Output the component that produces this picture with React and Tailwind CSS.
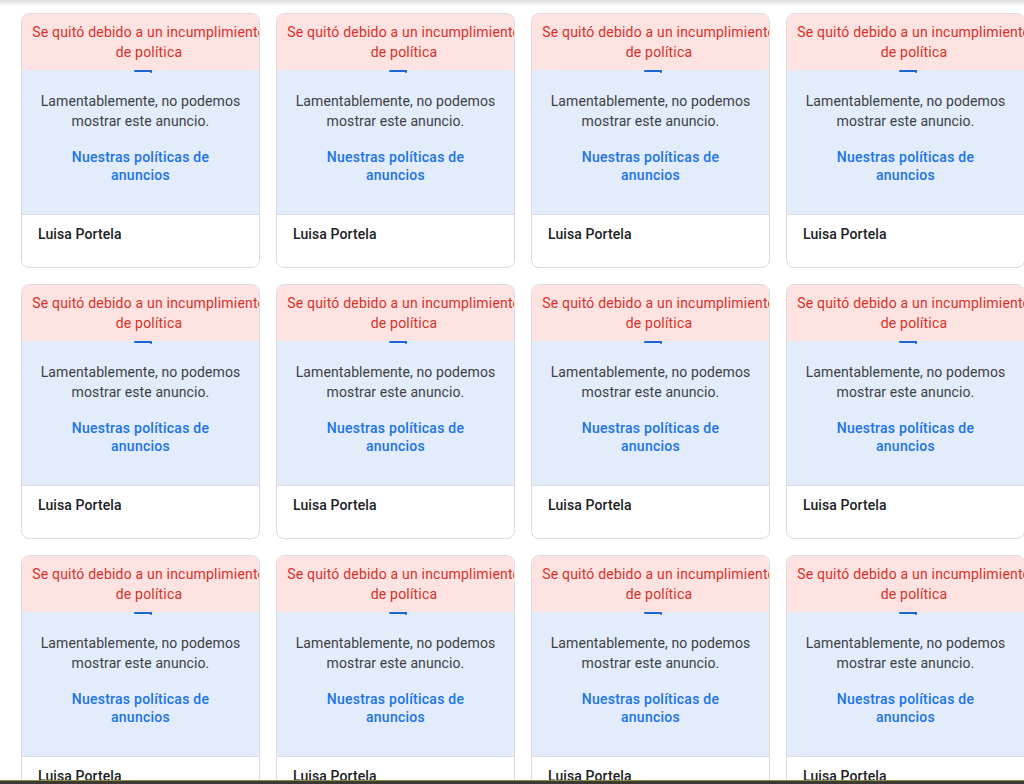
import React from 'react';

const cards = Array.from({ length: 12 }, (_, i) => ({ id: i, author: 'Luisa Portela' }));

function RemovedAdCard({ author }) {
  return (
    <div className="w-[239px] h-[255px] flex flex-col overflow-hidden rounded-lg border border-[#dadce0] bg-white">
      {/* policy violation banner */}
      <div className="h-[56px] shrink-0 bg-[#fde2e2] pl-[10px] py-2">
        <p className="w-[234px] text-center text-[14px] leading-5 tracking-[0.2px] text-[#d93025]">
          Se quitó debido a un incumplimiento de política
        </p>
      </div>

      {/* preview area */}
      <div className="relative h-[144px] shrink-0 bg-[#e3ecfb] flex flex-col items-center">
        <div className="absolute left-[112px] top-0 w-[18px] h-[2px] rounded-full bg-[#1967d2]" />
        <div className="absolute left-[128px] top-0 w-[2px] h-[3px] rounded-b-full bg-[#1967d2]" />
        <p className="mt-[21px] text-center text-[14px] leading-5 tracking-[0.1px] text-[#3c4043]">
          Lamentablemente, no podemos
          <br />
          mostrar este anuncio.
        </p>
        <a className="mt-[17px] text-center text-[14px] leading-[18px] tracking-[0.25px] font-medium text-[#1a73e8]">
          Nuestras políticas de
          <br />
          anuncios
        </a>
      </div>

      <div className="flex-1 border-t border-[#dadce0] px-4 pt-[7px]">
        <span className="text-[14px] leading-5 font-medium tracking-[0.1px] text-[#202124]">{author}</span>
      </div>
    </div>
  );
}

export default function App() {
  return (
    <div
      className="relative h-[784px] w-[1024px] overflow-hidden bg-white"
      style={{ fontFamily: 'Roboto, "Noto Sans", Arial, sans-serif' }}
    >
      <div className="h-[6px] bg-gradient-to-b from-[#dedede] to-white" />
      <div className="grid grid-cols-[repeat(4,239px)] gap-4 pl-[21px] pt-[7px]">
        {cards.map((c) => (
          <RemovedAdCard key={c.id} author={c.author} />
        ))}
      </div>
      {/* window edge at the bottom */}
      <div className="absolute bottom-0 left-0 right-0 h-[4px] bg-[#3b3b33] border-t border-[#8f8c4c]" />
    </div>
  );
}
